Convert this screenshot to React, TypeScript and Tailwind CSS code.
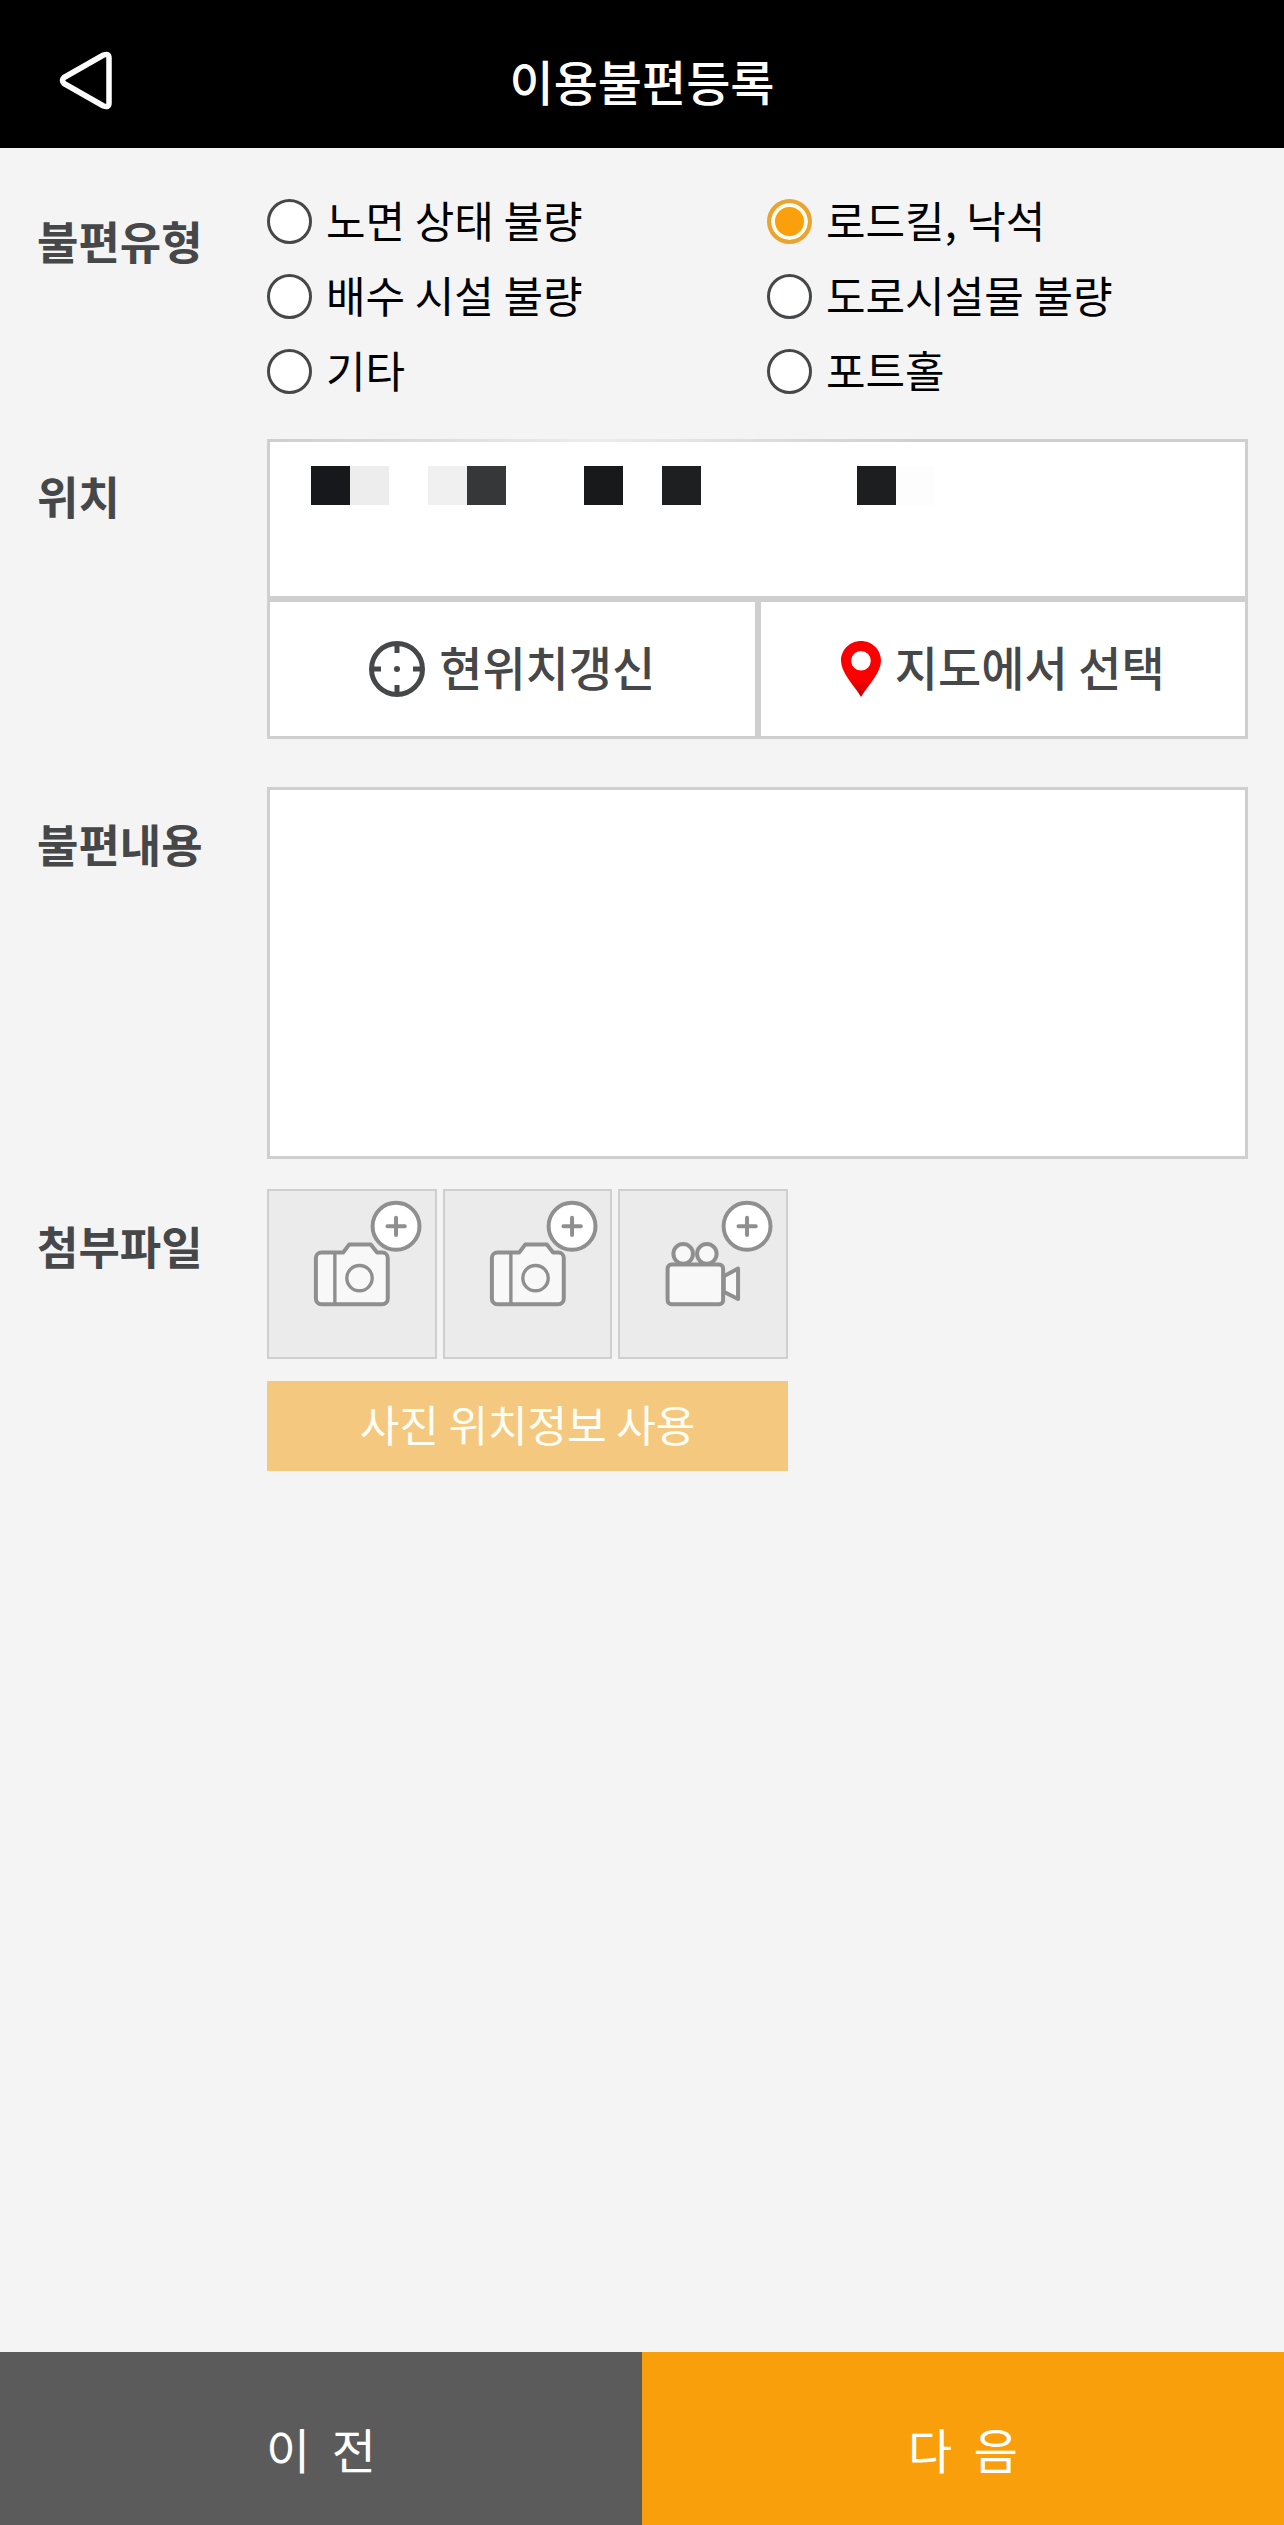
import React, { useState } from "react";

const complaintTypes = [
  "노면 상태 불량",
  "로드킬, 낙석",
  "배수 시설 불량",
  "도로시설물 불량",
  "기타",
  "포트홀",
];

const maskCells = [
  "bg-[#16181c]",
  "bg-[#ededed]",
  "",
  "bg-[#f0f0f0]",
  "bg-[#363738]",
  "",
  "",
  "bg-[#18191b]",
  "",
  "bg-[#1e1f21]",
  "",
  "",
  "",
  "",
  "bg-[#1d1e20]",
  "bg-[#fdfdfd]",
];

function PlusBadge() {
  return (
    <g stroke="#8f8f8f" strokeWidth="4" strokeLinecap="round">
      <circle cx="129.3" cy="37.3" r="23.5" fill="#fff" />
      <path d="M129.3 28.7v17.4M120.7 37.4h17.4" fill="none" />
    </g>
  );
}

function CameraIcon() {
  return (
    <svg viewBox="0 0 170 170" className="block w-full" aria-hidden="true">
      <g fill="#f8f8f8" stroke="#8f8f8f" strokeWidth="4" strokeLinejoin="round">
        <path d="M54.5 63.7H76.3L82.3 55.7H104L110.3 63.7H115.5a5.5 5.5 0 0 1 5.5 5.5V110a5.5 5.5 0 0 1-5.5 5.5H54.5A5.5 5.5 0 0 1 49 110V69.2a5.5 5.5 0 0 1 5.5-5.5Z" />
        <path d="M68 64v51" strokeWidth="3.4" />
        <circle cx="92.7" cy="89.3" r="12.7" strokeWidth="3.4" />
      </g>
      <PlusBadge />
    </svg>
  );
}

function VideoIcon() {
  return (
    <svg viewBox="0 0 170 170" className="block w-full" aria-hidden="true">
      <g fill="#f8f8f8" stroke="#8f8f8f" strokeWidth="4" strokeLinejoin="round">
        <circle cx="65.3" cy="65" r="9.8" />
        <circle cx="89" cy="65" r="9.8" />
        <path d="M106 87.5L120.3 79.7V110.3L106 103Z" />
        <rect x="49.7" y="75.7" width="55.6" height="39.7" rx="4" />
      </g>
      <PlusBadge />
    </svg>
  );
}

function TargetIcon() {
  return (
    <svg viewBox="0 0 56 56" className="size-14 shrink-0" fill="none" stroke="#464749" strokeWidth="5" aria-hidden="true">
      <circle cx="28" cy="28" r="25.5" />
      <path d="M28 3v9M28 44v9M3 28h9M44 28h9" />
      <circle cx="28" cy="28" r="3" fill="#464749" stroke="none" />
    </svg>
  );
}

function PinIcon() {
  return (
    <svg viewBox="0 0 40 56" className="h-14 w-10 shrink-0" aria-hidden="true">
      <linearGradient id="pin" x1="0" y1="0" x2="0" y2="1">
        <stop offset="0.7" stopColor="#fa0000" />
        <stop offset="1" stopColor="#c40000" />
      </linearGradient>
      <path
        fillRule="evenodd"
        fill="url(#pin)"
        d="M20 0C9 0 0 8.6 0 19.6C0 32 12 43 20 56C28 43 40 32 40 19.6C40 8.6 31 0 20 0ZM20 10a9.8 9.8 0 1 1 0 19.6a9.8 9.8 0 1 1 0-19.6Z"
      />
    </svg>
  );
}

function FieldTitle({ children, htmlFor }: { children: React.ReactNode; htmlFor?: string }) {
  const cls = "block w-[230px] shrink-0 pt-[25px] text-[45px] leading-[64px] font-bold text-[#464749]";
  return htmlFor ? (
    <label htmlFor={htmlFor} className={cls}>{children}</label>
  ) : (
    <div className={cls}>{children}</div>
  );
}

export default function App() {
  const [type, setType] = useState("로드킬, 낙석");
  return (
    <div className="flex min-h-screen flex-col bg-[#f4f4f4] font-['Noto_Sans_CJK_KR',sans-serif] text-black">
      <header className="relative flex h-[148px] items-center justify-center bg-black pt-3">
        <button type="button" aria-label="뒤로" className="absolute left-[58px]">
          <svg viewBox="0 0 56 60" className="h-[60px] w-14" fill="none" stroke="#fff" strokeWidth="5.5" strokeLinejoin="round" aria-hidden="true">
            <path d="M6 27.5L45.500 5Q51 3 51 8V53Q51 58 45.500 56L6 33.500Q3 30.500 6 27.500Z" />
          </svg>
        </button>
        <h1 className="text-[48px] leading-[64px] font-medium text-white">이용불편등록</h1>
      </header>

      <main className="flex flex-1 flex-col pt-9 pr-9 pl-[37px]">
        <section className="flex">
          <FieldTitle>불편유형</FieldTitle>
          <div role="radiogroup" aria-label="불편유형" className="grid flex-1 grid-cols-[500px_1fr]">
            {complaintTypes.map((name) => (
              <label key={name} className="flex h-[75px] items-center gap-3.5 text-[43px] leading-[64px]">
                <input
                  type="radio"
                  name="type"
                  checked={type === name}
                  onChange={() => setType(name)}
                  className="size-[45px] shrink-0 appearance-none rounded-full border-[3px] border-[#464749] bg-white checked:border-4 checked:border-[#eba430] checked:bg-[#faa00c] checked:shadow-[inset_0_0_0_4px_#fffdf0]"
                />
                <span className="pb-1.5">{name}</span>
              </label>
            ))}
          </div>
        </section>

        <section className="mt-[30px] flex">
          <FieldTitle>위치</FieldTitle>
          <div className="flex-1">
            <div role="textbox" aria-label="위치" aria-readonly="true" className="relative h-40 border-[3px] border-[#cfcfcf] bg-white px-[41px] pt-6">
              <div className="absolute -top-[3px] left-0 h-[3px] w-2/3 bg-linear-to-r from-white/0 via-white/60 to-white/0" />
              <div className="flex">
                {maskCells.map((cell, i) => (
                  <span key={i} className={`size-[39px] shrink-0 ${cell}`} />
                ))}
              </div>
            </div>
            <div className="grid grid-cols-2 text-[47px] leading-[64px] font-medium text-[#464749]">
              <button type="button" className="flex h-[140px] items-center justify-center gap-3.5 border-[3px] border-[#cfcfcf] bg-white">
                <TargetIcon />
                <span className="pb-1.5">현위치갱신</span>
              </button>
              <button type="button" className="flex h-[140px] items-center justify-center gap-3.5 border-[3px] border-[#cfcfcf] bg-white">
                <PinIcon />
                <span className="pb-1.5">지도에서 선택</span>
              </button>
            </div>
          </div>
        </section>

        <section className="mt-12 flex">
          <FieldTitle htmlFor="content">불편내용</FieldTitle>
          <textarea
            id="content"
            className="h-[372px] min-w-0 flex-1 resize-none border-[3px] border-[#cfcfcf] bg-white p-6 text-[43px] leading-[64px] outline-none"
          />
        </section>

        <section className="mt-[30px] flex">
          <FieldTitle>첨부파일</FieldTitle>
          <div className="w-[521px]">
            <div className="grid grid-cols-3 gap-1.5">
              <button type="button" aria-label="사진 추가 1" className="bg-[#ebebeb] outline-2 -outline-offset-2 outline-[#cfcfcf]"><CameraIcon /></button>
              <button type="button" aria-label="사진 추가 2" className="bg-[#ebebeb] outline-2 -outline-offset-2 outline-[#cfcfcf]"><CameraIcon /></button>
              <button type="button" aria-label="동영상 추가" className="bg-[#ebebeb] outline-2 -outline-offset-2 outline-[#cfcfcf]"><VideoIcon /></button>
            </div>
            <button type="button" className="mt-[22px] h-[90px] w-full bg-[#f4c97f] pb-1.5 text-[43px] leading-[64px] text-[#fffef5]">
              사진 위치정보 사용
            </button>
          </div>
        </section>
      </main>

      <footer className="grid grid-cols-2 text-[48px] leading-[64px] text-white">
        <button type="button" className="h-[173px] bg-[#5b5b5b] pt-[18px]">이&nbsp;&nbsp;전</button>
        <button type="button" className="h-[173px] bg-[#f99f0b] pt-[18px]">다&nbsp;&nbsp;음</button>
      </footer>
    </div>
  );
}
